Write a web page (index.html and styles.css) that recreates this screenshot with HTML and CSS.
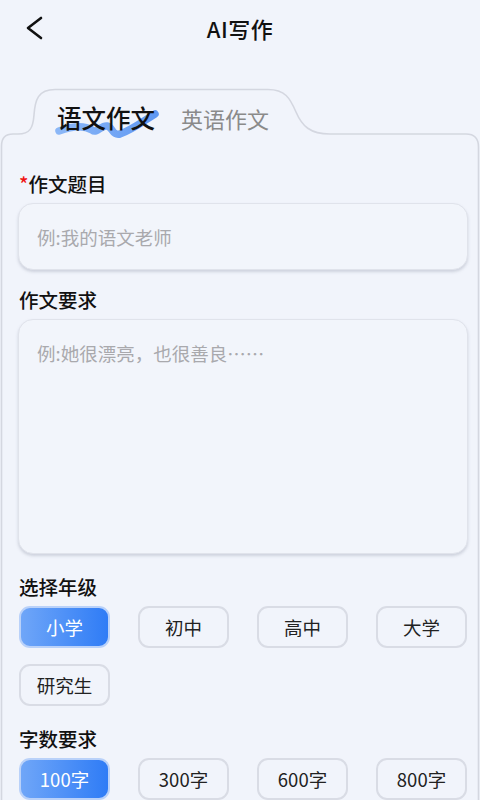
FILE: index.html
```html
<!DOCTYPE html>
<html lang="zh-CN">
<head>
<meta charset="utf-8">
<title>AI写作</title>
<link rel="stylesheet" href="styles.css">
</head>
<body>
<div class="page">
  <header class="topbar">
    <div class="back">
      <svg width="24" height="28" viewBox="0 0 24 28"><path d="M18 4 L5 14 L18 24" fill="none" stroke="#111" stroke-width="2.6" stroke-linecap="round" stroke-linejoin="round"/></svg>
    </div>
    <h1 class="title">AI写作</h1>
    <div></div>
  </header>

  <section class="card">
    <svg class="card-bg" width="480" height="712" viewBox="0 0 480 712">
      <path d="M1.5,712 L1.5,58 Q1.5,46 13,46 L18,46 C30,46 33,40 34,27 C35,12 38,1.5 55,1.5 L268,1.5 C285,1.5 290,10 296,24 C302,38 310,46 330,46 L466,46 Q478.5,46 478.5,59 L478.5,712" fill="none" stroke="#d4d7e0" stroke-width="1.6"/>
      <defs>
        <linearGradient id="sq" x1="0" x2="1" y1="0" y2="0">
          <stop offset="0" stop-color="#8bb7f7"/>
          <stop offset="1" stop-color="#6199f3"/>
        </linearGradient>
      </defs>
      <path d="M59,43 C70,39 82,36 92,42 C97,46 101,37 107,38 C113,39 112,48 120,46 C132,42 145,32 155,26" fill="none" stroke="url(#sq)" stroke-width="7.5" stroke-linecap="round" stroke-linejoin="round"/>
    </svg>

    <div class="tabs">
      <span class="tab active">语文作文</span>
      <span class="tab">英语作文</span>
    </div>

    <div class="body">
      <div class="label first"><span class="req">*</span>作文题目</div>
      <input class="field" type="text" placeholder="例:我的语文老师">

      <div class="label">作文要求</div>
      <textarea class="field area" placeholder="例:她很漂亮，也很善良……"></textarea>

      <div class="label group">选择年级</div>
      <div class="options">
        <span class="opt on">小学</span>
        <span class="opt">初中</span>
        <span class="opt">高中</span>
        <span class="opt">大学</span>
        <span class="opt">研究生</span>
      </div>

      <div class="label group">字数要求</div>
      <div class="options">
        <span class="opt on">100字</span>
        <span class="opt">300字</span>
        <span class="opt">600字</span>
        <span class="opt">800字</span>
      </div>
    </div>
  </section>
</div>
</body>
</html>
```

FILE: styles.css
```css
* { box-sizing: border-box; }
html, body {
  margin: 0;
  padding: 0;
  background: #f1f4fb;
  font-family: "Noto Sans CJK SC", "Noto Sans", "Liberation Sans", sans-serif;
  color: #111;
}
.page {
  width: 480px;
  height: 800px;
  overflow: hidden;
}
.topbar {
  height: 56px;
  display: grid;
  grid-template-columns: 1fr auto 1fr;
  align-items: center;
}
.back {
  padding-left: 23px;
  display: flex;
  align-items: center;
  height: 56px;
}
.back svg { display: block; }
.title {
  margin: 0;
  font-size: 22px;
  font-weight: 500;
  line-height: 28px;
  letter-spacing: 0.5px;
}
.card {
  position: relative;
  margin-top: 32px;
  height: 712px;
}
.card-bg {
  position: absolute;
  left: 0;
  top: 0;
  z-index: 0;
}
.tabs {
  position: relative;
  z-index: 1;
  height: 46px;
  display: flex;
  align-items: flex-start;
  gap: 26px;
  padding: 15px 0 0 57px;
}
.tab {
  font-size: 22px;
  line-height: 30px;
  color: #8a8a8a;
}
.tab.active {
  font-size: 24.5px;
  font-weight: 500;
  color: #111;
}
.body {
  position: relative;
  z-index: 1;
  padding: 0 12px 0 18px;
  display: flex;
  flex-direction: column;
}
.label {
  font-size: 19.5px;
  line-height: 26px;
  font-weight: 500;
  margin: 17px 0 6px 1px;
  color: #111;
}
.label.first { margin-top: 37px; }
.label.group { margin-top: 20px; }
.req { color: #f01414; }
.field {
  width: 450px;
  height: 67px;
  border: 1px solid #e0e3eb;
  border-radius: 15px;
  background: #f2f5fb;
  box-shadow: 0 2px 3px rgba(140, 146, 165, 0.35);
  padding: 0 18px;
  font-family: inherit;
  font-size: 18.5px;
  color: #333;
  outline: none;
}
.field::placeholder { color: #a9a9ad; }
.area {
  height: 235px;
  padding-top: 20px;
  line-height: 26px;
  resize: none;
}
.options {
  display: grid;
  grid-template-columns: repeat(4, 91px);
  column-gap: 28px;
  row-gap: 16px;
  padding-left: 1px;
}
.opt {
  height: 42px;
  border: 2px solid #d9dce5;
  border-radius: 11px;
  display: flex;
  align-items: center;
  justify-content: center;
  font-size: 18.5px;
  color: #222;
}
.opt.on {
  background: linear-gradient(90deg, #6fa6f8 0%, #2f7cf6 100%);
  border-color: #b9d1f9;
  color: #fff;
}
```
